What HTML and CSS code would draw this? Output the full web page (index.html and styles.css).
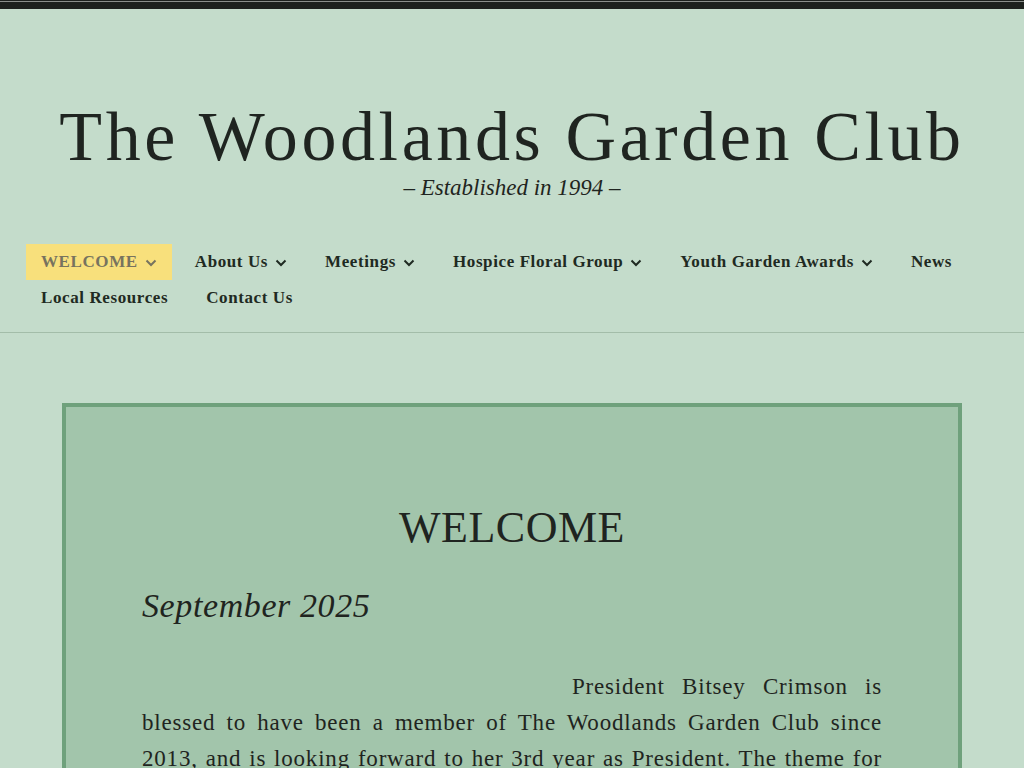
FILE: index.html
```html
<!DOCTYPE html>
<html lang="en">
<head>
<meta charset="utf-8">
<title>The Woodlands Garden Club</title>
<link rel="stylesheet" href="styles.css">
</head>
<body>
<div class="topbar"></div>
<header class="site-header">
  <div class="branding">
    <h1 class="site-title">The Woodlands Garden Club</h1>
    <p class="site-tagline">– Established in 1994 –</p>
  </div>
  <nav class="main-nav">
    <ul class="menu">
      <li class="menu-item active"><a href="#">WELCOME<svg class="chev" viewBox="0 0 12 8"><path d="M1.5 1.5 L6 6 L10.5 1.5"/></svg></a></li>
      <li class="menu-item"><a href="#">About Us<svg class="chev" viewBox="0 0 12 8"><path d="M1.5 1.5 L6 6 L10.5 1.5"/></svg></a></li>
      <li class="menu-item"><a href="#">Meetings<svg class="chev" viewBox="0 0 12 8"><path d="M1.5 1.5 L6 6 L10.5 1.5"/></svg></a></li>
      <li class="menu-item"><a href="#">Hospice Floral Group<svg class="chev" viewBox="0 0 12 8"><path d="M1.5 1.5 L6 6 L10.5 1.5"/></svg></a></li>
      <li class="menu-item"><a href="#">Youth Garden Awards<svg class="chev" viewBox="0 0 12 8"><path d="M1.5 1.5 L6 6 L10.5 1.5"/></svg></a></li>
      <li class="menu-item"><a href="#">News</a></li>
      <li class="menu-item"><a href="#">Local Resources</a></li>
      <li class="menu-item"><a href="#">Contact Us</a></li>
    </ul>
  </nav>
</header>
<main class="content">
  <article class="entry">
    <h2 class="entry-title">WELCOME</h2>
    <h3 class="entry-subtitle">September 2025</h3>
    <p class="entry-text">President Bitsey Crimson is blessed to have been a member of The Woodlands Garden Club since 2013, and is looking forward to her 3rd year as President. The theme for this year is a celebration of the gardens, gardeners and friendships that make our club special.</p>
  </article>
</main>
</body>
</html>
```

FILE: styles.css
```css
html, body {
  margin: 0;
  padding: 0;
}
body {
  background: #c4dccb;
  color: #1f2420;
  font-family: "Liberation Serif", "Times New Roman", serif;
}
.topbar {
  height: 9px;
  background: #1c211d;
  border-top: 1px solid #1c211d;
  box-shadow: inset 0 1px 0 #8a8f8b;
  box-sizing: border-box;
}
.site-header {
  border-bottom: 1px solid #a3bda9;
  padding: 0 26px 16px;
}
.branding {
  text-align: center;
  padding-top: 88px;
}
.site-title {
  margin: 0;
  font-size: 70px;
  line-height: 80px;
  font-weight: normal;
  letter-spacing: 3.6px;
  color: #1f2420;
}
.site-tagline {
  margin: -2px 0 0;
  font-size: 23px;
  line-height: 26px;
  font-style: italic;
}
.main-nav {
  margin-top: 43px;
}
.menu {
  list-style: none;
  margin: 0;
  padding: 0;
  display: flex;
  flex-wrap: wrap;
  column-gap: 8px;
}
.menu-item a {
  display: flex;
  align-items: center;
  height: 36px;
  padding: 0 15px;
  font-size: 17px;
  font-weight: bold;
  letter-spacing: 0.6px;
  color: #1f2a22;
  text-decoration: none;
}
.menu-item.active a {
  background: #f8e07c;
  color: #77735f;
}
.chev {
  width: 12px;
  height: 8px;
  margin-left: 7px;
  margin-top: 2px;
  fill: none;
  stroke: currentColor;
  stroke-width: 2;
}
.content {
  padding: 70px 62px 40px;
}
.entry {
  background: #a2c5ab;
  border: 4px solid #6fa17c;
  padding: 94px 76px 60px;
}
.entry-title {
  margin: 0;
  text-align: center;
  font-size: 44px;
  line-height: 54px;
  font-weight: normal;
  letter-spacing: 0.5px;
}
.entry-subtitle {
  margin: 31px 0 0;
  font-size: 34px;
  line-height: 40px;
  font-style: italic;
  font-weight: normal;
  letter-spacing: 0.6px;
}
.entry-text {
  margin: 43px 0 0;
  font-size: 23px;
  line-height: 36px;
  letter-spacing: 0.8px;
  text-align: justify;
  text-indent: 430px;
}
```
